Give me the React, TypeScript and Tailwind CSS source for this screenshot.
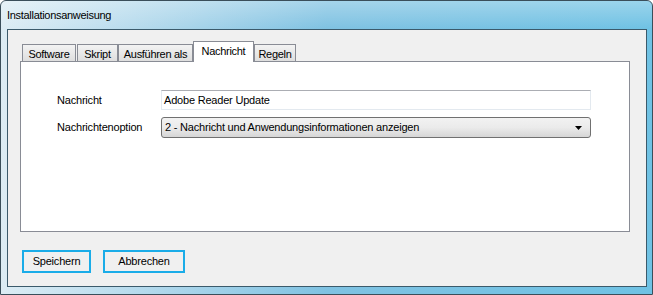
import React from "react";

const tabs = [
  { label: "Software", width: "w-[54px]", gap: "mr-[1px]" },
  { label: "Skript", width: "w-[41px]", gap: "mr-0" },
  { label: "Ausführen als", width: "w-[75px]", gap: "mr-0" },
  { label: "Nachricht", width: "w-[61px]", gap: "mr-0", active: true },
  { label: "Regeln", width: "w-[42px]", gap: "mr-0" },
];

function Tab({ label, width, gap, active }: { label: string; width: string; gap: string; active?: boolean }) {
  if (active) {
    return (
      <div
        className={`${width} ${gap} relative z-10 -mb-px h-[21px] border border-b-0 border-[#898c95] bg-white pt-[2px] text-center text-[11px] leading-[14px] tracking-[-0.3px] text-black`}
      >
        {label}
      </div>
    );
  }
  return (
    <div
      className={`${width} ${gap} h-[17px] border border-b-0 border-[#898c95] bg-gradient-to-b from-[#f3f3f3] to-[#dedede] pt-[2px] text-center text-[11px] leading-[14px] tracking-[-0.3px] text-black`}
    >
      {label}
    </div>
  );
}

export default function App() {
  return (
    <div
      className="relative h-[295px] w-[653px] overflow-hidden rounded-t-[6px] border border-[#3a4e5a] bg-gradient-to-r from-[#dcecf4] via-[#7fc2e2] to-[#6fc2e4]"
      style={{ fontFamily: '"Liberation Sans", Arial, sans-serif' }}
    >
      {/* title bar */}
      <div className="flex h-[28px] items-center bg-gradient-to-b from-white/30 to-transparent pl-[6px] pt-[1px]">
        <span className="text-[11px] tracking-[-0.3px] text-black">Installationsanweisung</span>
      </div>

      {/* client area */}
      <div className="ml-[6px] mr-[5px] flex h-[258px] flex-col border border-[#3b5a6b] bg-[#f0f0f0] tracking-[-0.2px]">
        <div className="ml-[12px] mt-[11px] w-[610px]">
          <div className="flex h-[20px] items-end pl-[2px]">
            {tabs.map((t) => (
              <Tab key={t.label} {...t} />
            ))}
          </div>
          <div className="h-[171px] border border-[#898c95] bg-white pl-[36px] pt-[28px]">
            <div className="flex items-center">
              <span className="w-[104px] text-[11px] text-black">Nachricht</span>
              <div className="flex h-[20px] w-[430px] items-center border border-[#e3e9ef] border-t-[#abadb3] bg-white pl-[2px] text-[11px] text-black">
                Adobe Reader Update
              </div>
            </div>
            <div className="mt-[7px] flex items-center">
              <span className="w-[104px] text-[11px] text-black">Nachrichtenoption</span>
              <div className="flex h-[21px] w-[430px] items-center justify-between rounded-[3px] border border-[#707070] bg-gradient-to-b from-[#f2f2f2] via-[#ebebeb] to-[#d6d6d6] pl-[3px] pr-[8px] text-[11px] text-black">
                <span>2 - Nachricht und Anwendungsinformationen anzeigen</span>
                <svg width="7" height="4" viewBox="0 0 7 4">
                  <path d="M0 0h7L3.5 4z" fill="#000" />
                </svg>
              </div>
            </div>
          </div>
        </div>

        <div className="ml-[14px] mt-[18px] flex gap-[12px]">
          <button className="h-[23px] w-[69px] border-2 border-[#1aace8] bg-[#f0f0f0] text-[11px] text-black">
            Speichern
          </button>
          <button className="h-[23px] w-[82px] border-2 border-[#1aace8] bg-[#f0f0f0] text-[11px] text-black">
            Abbrechen
          </button>
        </div>
      </div>
    </div>
  );
}
